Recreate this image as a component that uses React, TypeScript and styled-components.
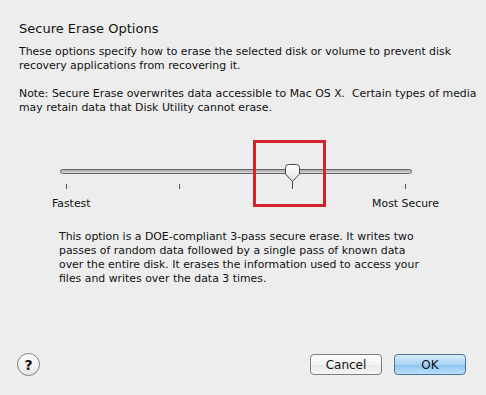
import { useState } from "react";
import styled, { createGlobalStyle } from "styled-components";

const GlobalStyle = createGlobalStyle`
  body {
    margin: 0;
    background: #ededed;
  }
`;

const Dialog = styled.div`
  width: 486px;
  height: 395px;
  box-sizing: border-box;
  padding: 21px 8px 0 19px;
  display: flex;
  flex-direction: column;
  background: #ededed;
  color: #111;
  font-family: "DejaVu Sans", "Noto Sans", sans-serif;
  font-size: 10.9px;
`;

const Title = styled.h1`
  margin: 0;
  font-size: 13px;
  font-weight: normal;
  line-height: 16px;
`;

const Para = styled.p<{ $gap: number }>`
  margin: ${(p) => p.$gap}px 0 0 0;
  line-height: 14px;
`;

const SliderArea = styled.div`
  position: relative;
  margin: 25px 0 0 33px;
  width: 387px;
  height: 70px;
`;

const Track = styled.div`
  position: absolute;
  left: 8px;
  top: 29px;
  width: 352px;
  height: 5px;
  box-sizing: border-box;
  border: 1px solid #666;
  border-radius: 3px;
  background: linear-gradient(#a9a9a9, #d6d6d6);
`;

const Ticks = styled.div`
  position: absolute;
  left: 14px;
  top: 44px;
  width: 340px;
  display: flex;
  justify-content: space-between;
`;

const Tick = styled.span`
  width: 1px;
  height: 5px;
  background: #555;
`;

const Labels = styled.div`
  position: absolute;
  left: 0;
  right: 0;
  top: 57px;
  display: flex;
  justify-content: space-between;
  line-height: 14px;
`;

const Thumb = styled.svg`
  position: absolute;
  top: 24px;
`;

const Highlight = styled.div`
  position: absolute;
  left: 201px;
  top: 0;
  width: 73px;
  height: 67px;
  box-sizing: border-box;
  border: 3px solid #d3232a;
`;

const Description = styled.p`
  margin: 20px 0 0 40px;
  width: 360px;
  line-height: 14px;
`;

const Footer = styled.div`
  margin: auto -8px 0 -19px;
  padding: 0 20px 19px 17px;
  display: flex;
  align-items: center;
  gap: 12px;
`;

const HelpButton = styled.button`
  width: 23px;
  height: 23px;
  padding: 0;
  border-radius: 50%;
  border: 1px solid #7c7c7c;
  background: linear-gradient(#ffffff, #e6e6e6);
  font-family: "DejaVu Sans", sans-serif;
  font-weight: bold;
  font-size: 14px;
  color: #111;
  margin-right: auto;
`;

const Button = styled.button<{ $primary?: boolean }>`
  width: 72px;
  height: 21px;
  box-sizing: border-box;
  border-radius: 4px;
  border: 1px solid ${(p) => (p.$primary ? "#4f73a0" : "#7d7d7d")};
  background: ${(p) =>
    p.$primary
      ? "linear-gradient(#d8ecfc, #a9d3f5 50%, #8cc3f0 51%, #b9e0fb)"
      : "linear-gradient(#ffffff, #f3f3f3 50%, #e8e8e8 51%, #f6f6f6)"};
  font-family: "DejaVu Sans", sans-serif;
  font-size: 12px;
  color: #111;
  padding: 0;
`;

export default function App() {
  const [level] = useState(2);
  const tickStart = 14;
  const tickGap = 113;
  const thumbLeft = tickStart + level * tickGap - 8;

  return (
    <Dialog>
      <GlobalStyle />
      <Title>Secure Erase Options</Title>
      <Para $gap={8}>
        These options specify how to erase the selected disk or volume to prevent disk recovery
        applications from recovering it.
      </Para>
      <Para $gap={14}>
        Note: Secure Erase overwrites data accessible to Mac OS X.&nbsp; Certain types of media may
        retain data that Disk Utility cannot erase.
      </Para>
      <SliderArea>
        <Track />
        <Ticks>
          <Tick />
          <Tick />
          <Tick />
          <Tick />
        </Ticks>
        <Labels>
          <span>Fastest</span>
          <span>Most Secure</span>
        </Labels>
        <Thumb width="17" height="24" viewBox="0 0 17 24" style={{ left: thumbLeft }}>
          <defs>
            <linearGradient id="thumbFill" x1="0" y1="0" x2="0" y2="1">
              <stop offset="0" stopColor="#ffffff" />
              <stop offset="1" stopColor="#e4e4e4" />
            </linearGradient>
          </defs>
          <path
            d="M1.5 3.5 Q1.5 0.5 4.5 0.5 H12.5 Q15.5 0.5 15.5 3.5 V10 L8.5 17.5 L1.5 10 Z"
            fill="url(#thumbFill)"
            stroke="#4a4a4a"
          />
          <line x1="8.5" y1="17.5" x2="8.5" y2="23" stroke="#4a4a4a" />
        </Thumb>
        <Highlight />
      </SliderArea>
      <Description>
        This option is a DOE-compliant 3-pass secure erase. It writes two passes of random data
        followed by a single pass of known data over the entire disk. It erases the information
        used to access your files and writes over the data 3 times.
      </Description>
      <Footer>
        <HelpButton>?</HelpButton>
        <Button>Cancel</Button>
        <Button $primary>OK</Button>
      </Footer>
    </Dialog>
  );
}
